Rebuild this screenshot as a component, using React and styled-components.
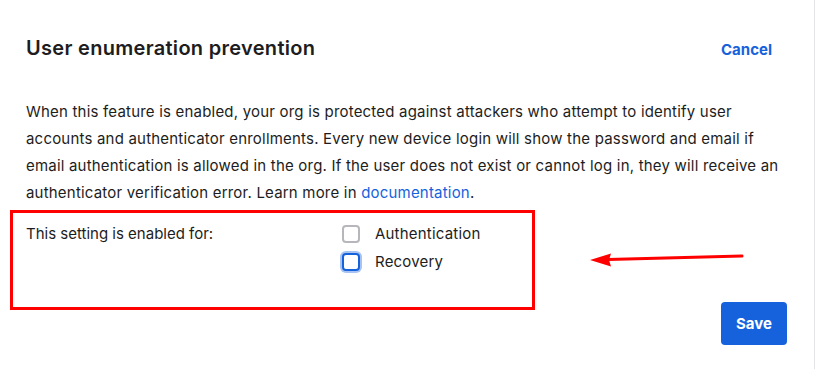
import React from 'react';
import styled, { createGlobalStyle } from 'styled-components';

const GlobalStyle = createGlobalStyle`
  body {
    margin: 0;
    background: #fff;
    font-family: Inter, "Noto Sans", "Liberation Sans", sans-serif;
    color: #1d1d21;
  }
`;

const Dialog = styled.div`
  box-sizing: border-box;
  width: 815px;
  height: 369px;
  background: #fff;
  border-right: 1px solid #e4e4e7;
  overflow: hidden;
`;

const Header = styled.div`
  display: flex;
  justify-content: space-between;
  align-items: baseline;
  padding: 36px 42px 0 26px;
`;

const Title = styled.h2`
  margin: 0;
  font-size: 20px;
  line-height: 24px;
  font-weight: 600;
  letter-spacing: 0.3px;
  color: #1d1d21;
`;

const TextButton = styled.button`
  background: none;
  border: 0;
  padding: 0;
  font-family: inherit;
  font-size: 15px;
  font-weight: 700;
  color: #1662dd;
  cursor: pointer;
`;

const Description = styled.p`
  margin: 38px 0 0;
  padding: 0 26px;
  font-size: 15px;
  line-height: 27px;
  letter-spacing: 0.2px;
`;

const Link = styled.a`
  color: #1662dd;
  text-decoration: none;
`;

const FormArea = styled.div`
  display: flex;
  align-items: flex-start;
  margin-top: 4px;
  padding-left: 10px;
`;

const Highlight = styled.div`
  box-sizing: border-box;
  width: 525px;
  height: 100px;
  border: 3px solid #ff0000;
  padding: 7px 13px;
  display: grid;
  grid-template-columns: 316px auto;
  align-items: start;
`;

const FieldLabel = styled.div`
  font-size: 15px;
  line-height: 28px;
`;

const Options = styled.div`
  display: flex;
  flex-direction: column;
`;

const Option = styled.label`
  display: flex;
  align-items: center;
  gap: 15px;
  height: 28px;
  font-size: 15px;
  line-height: 28px;
  letter-spacing: 0.2px;
`;

const Checkbox = styled.span`
  box-sizing: border-box;
  width: 18px;
  height: 18px;
  border-radius: 4px;
  border: 2px solid ${p => (p.$focused ? '#1662dd' : '#b6b6bc')};
  box-shadow: ${p => (p.$focused ? '0 0 0 2px #a9c3f0' : 'none')};
  background: #fff;
`;

const Aside = styled.div`
  display: flex;
  flex-direction: column;
  align-items: flex-start;
  width: 252px;
  padding-top: 42px;
`;

const Arrow = styled.svg`
  display: block;
  margin-left: 54px;
`;

const SaveButton = styled.button`
  align-self: flex-end;
  margin-top: 34px;
  width: 66px;
  height: 43px;
  border: 0;
  border-radius: 4px;
  background: #1662dd;
  color: #fff;
  font-family: inherit;
  font-size: 15px;
  font-weight: 700;
  cursor: pointer;
`;

export default function App() {
  return (
    <>
      <GlobalStyle />
      <Dialog>
        <Header>
          <Title>User enumeration prevention</Title>
          <TextButton>Cancel</TextButton>
        </Header>
        <Description>
          When this feature is enabled, your org is protected against attackers who attempt to identify user
          <br />
          accounts and authenticator enrollments. Every new device login will show the password and email if
          <br />
          email authentication is allowed in the org. If the user does not exist or cannot log in, they will receive an
          <br />
          authenticator verification error. Learn more in <Link href="#">documentation</Link>.
        </Description>
        <FormArea>
          <Highlight>
            <FieldLabel>This setting is enabled for:</FieldLabel>
            <Options>
              <Option>
                <Checkbox />
                <span>Authentication</span>
              </Option>
              <Option>
                <Checkbox $focused />
                <span>Recovery</span>
              </Option>
            </Options>
          </Highlight>
          <Aside>
            <Arrow width="155" height="16" viewBox="0 0 155 16">
              <line x1="19" y1="7.6" x2="153" y2="4" stroke="#ff0000" strokeWidth="3" strokeLinecap="round" />
              <polygon points="1,8 22,1.5 20,8 22,14.5" fill="#ff0000" />
            </Arrow>
            <SaveButton>Save</SaveButton>
          </Aside>
        </FormArea>
      </Dialog>
    </>
  );
}
